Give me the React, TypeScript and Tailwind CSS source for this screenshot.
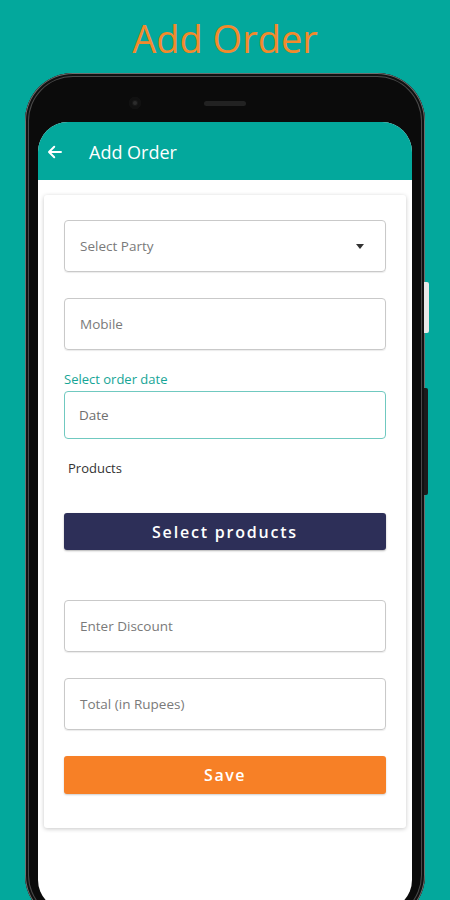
function Field({ label, arrow }: { label: string; arrow?: boolean }) {
  return (
    <div className="flex h-[52px] items-center justify-between rounded-[4px] border border-[#c9c9c9] px-[15px] shadow-[0_1px_1px_rgba(0,0,0,0.08)]">
      <span className="text-[13.5px] text-[#7a7a7a]">{label}</span>
      {arrow && <span className="mr-[6px] h-0 w-0 border-x-[4px] border-t-[5px] border-x-transparent border-t-[#333]" />}
    </div>
  )
}

export default function App() {
  return (
    <div className="relative h-[900px] w-[450px] overflow-hidden bg-[#03a89c] font-['Open_Sans',sans-serif]">
      <h1 className="pt-[12px] text-center text-[38px] leading-[52px] text-[#f38a2c]">Add Order</h1>

      <div className="relative ml-[25px] mt-[9px] h-[850px] w-[400px] rounded-[48px] bg-[#0b0b0b] px-[13px] pt-[49px] shadow-[inset_0_0_0_1px_#6e6e6e,inset_0_0_0_3px_#111,inset_0_0_0_4px_#4a4a4a]">
        <div className="absolute left-[104px] top-[24px] h-[12px] w-[12px] rounded-full bg-[#1a1a1a] shadow-[inset_0_0_0_3px_#111]">
          <div className="m-[4px] h-[4px] w-[4px] rounded-full bg-[#2c2c2c]" />
        </div>
        <div className="absolute left-[179px] top-[28px] h-[5px] w-[42px] rounded-full bg-[#222]" />
        <div className="absolute -right-[4px] top-[209px] h-[51px] w-[5px] rounded-r-[2px] bg-[#e8e8e8]" />
        <div className="absolute -right-[3px] top-[315px] h-[107px] w-[4px] rounded-r-[2px] bg-[#1c1c1c]" />

        <div className="h-[788px] overflow-hidden rounded-[30px] bg-white">
          <div className="flex h-[58px] items-center bg-[#03a89c] pl-[8px] pt-[2px] text-white">
            <svg width="18" height="18" viewBox="0 0 24 24" fill="none" stroke="white" strokeWidth="2.6" strokeLinecap="round" strokeLinejoin="round">
              <path d="M20 12H5M11 5l-7 7 7 7" />
            </svg>
            <span className="ml-[25px] text-[18px]">Add Order</span>
          </div>

          <div className="mx-[6px] mt-[15px] rounded-[3px] bg-white px-[20px] pb-[34px] pt-[25px] shadow-[0_1px_4px_rgba(0,0,0,0.22)]">
            <Field label="Select Party" arrow />
            <div className="mt-[26px]">
              <Field label="Mobile" />
            </div>
            <div className="mt-[20px] text-[13px] leading-[18px] text-[#16a596]">Select order date</div>
            <div className="mt-[3px] flex h-[48px] items-center rounded-[4px] border-[1.5px] border-[#70c9c0] px-[14px]">
              <span className="text-[13.5px] text-[#6f6f6f]">Date</span>
            </div>
            <div className="mt-[20px] pl-[4px] text-[13px] leading-[18px] text-[#333]">Products</div>
            <div className="mt-[36px] flex h-[37px] items-center justify-center rounded-[3px] bg-[#2d2f58] text-[16px] font-semibold tracking-[1.8px] text-white shadow-[0_1px_2px_rgba(0,0,0,0.3)]">
              Select products
            </div>
            <div className="mt-[50px]">
              <Field label="Enter Discount" />
            </div>
            <div className="mt-[26px]">
              <Field label="Total (in Rupees)" />
            </div>
            <div className="mt-[26px] flex h-[38px] items-center justify-center rounded-[3px] bg-[#f78026] text-[16px] font-semibold tracking-[1.5px] text-white shadow-[0_1px_2px_rgba(0,0,0,0.2)]">
              Save
            </div>
          </div>
        </div>
      </div>
    </div>
  )
}
